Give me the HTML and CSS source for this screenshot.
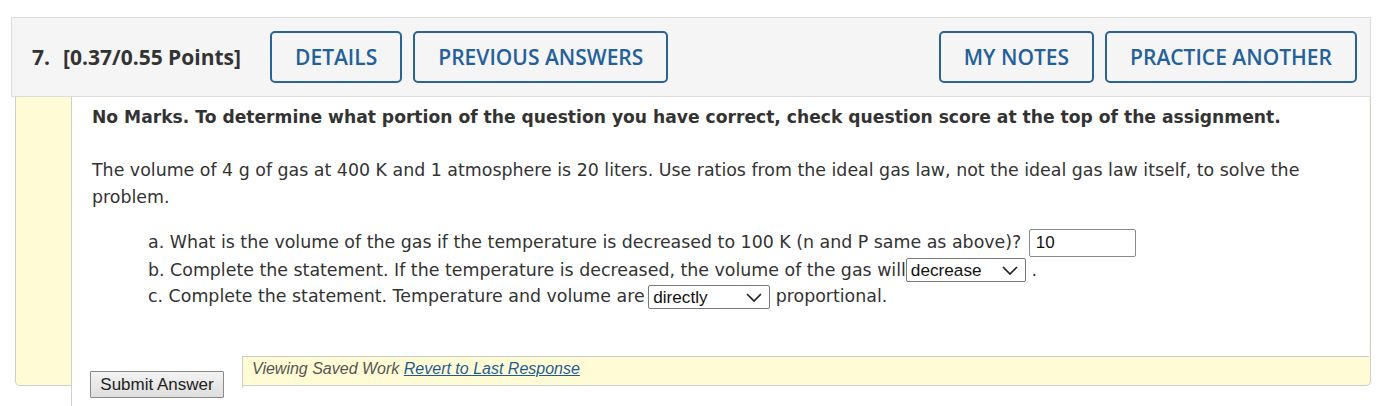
FILE: index.html
```html
<!DOCTYPE html>
<html lang="en">
<head>
<meta charset="utf-8">
<title>Question 7</title>
<link rel="stylesheet" href="styles.css">
</head>
<body>
<div class="question">
  <div class="q-header">
    <div class="q-title"><span class="q-num">7.</span>[0.37/0.55 Points]</div>
    <div class="q-actions">
      <button class="hbtn">DETAILS</button>
      <button class="hbtn">PREVIOUS ANSWERS</button>
    </div>
    <div class="q-actions right">
      <button class="hbtn">MY NOTES</button>
      <button class="hbtn">PRACTICE ANOTHER</button>
    </div>
  </div>
  <div class="q-body">
    <div class="strip"></div>
    <div class="main">
      <div class="content">
        <p class="notice">No Marks. To determine what portion of the question you have correct, check question score at the top of the assignment.</p>
        <p class="prompt">The volume of 4 g of gas at 400 K and 1 atmosphere is 20 liters. Use ratios from the ideal gas law, not the ideal gas law itself, to solve the problem.</p>
        <ol class="parts">
          <li class="part-a">a. What is the volume of the gas if the temperature is decreased to 100 K (n and P same as above)? <span class="tinput">10</span></li>
          <li class="part-b">b. Complete the statement. If the temperature is decreased, the volume of the gas will<span class="sel sel-b"><span class="sel-text">decrease</span><svg class="chev" width="16" height="9" viewBox="0 0 16 9"><path d="M1 1 L8 8 L15 1" fill="none" stroke="#222" stroke-width="1.7"/></svg></span> .</li>
          <li class="part-c">c. Complete the statement. Temperature and volume are <span class="sel sel-c"><span class="sel-text">directly</span><svg class="chev" width="16" height="9" viewBox="0 0 16 9"><path d="M1 1 L8 8 L15 1" fill="none" stroke="#222" stroke-width="1.7"/></svg></span> proportional.</li>
        </ol>
      </div>
      <div class="bottom">
        <div class="submit-cell"><button class="submit">Submit Answer</button></div>
        <div class="saved-cell"><span class="saved">Viewing Saved Work <a href="#" class="revert">Revert to Last Response</a></span></div>
      </div>
    </div>
  </div>
</div>
</body>
</html>
```
FILE: styles.css
```css
html, body {
  margin: 0;
  padding: 0;
  background: #ffffff;
}
body {
  overflow: hidden;
  height: 406px;
}
.question {
  margin: 17px 0 0 11px;
  width: 1360px;
}
.q-header {
  box-sizing: border-box;
  height: 80px;
  background: #f5f5f5;
  border: 1px solid #dcdcdc;
  display: flex;
  align-items: center;
  padding: 0 13px 0 20px;
}
.q-title {
  font-family: "Open Sans", "Liberation Sans", sans-serif;
  font-weight: 700;
  font-size: 21px;
  color: #333333;
  margin-right: 29px;
  white-space: nowrap;
}
.q-num {
  margin-right: 13px;
}
.q-actions {
  display: flex;
  gap: 11px;
}
.q-actions.right {
  margin-left: auto;
}
.hbtn {
  box-sizing: border-box;
  height: 52px;
  padding: 0 23px;
  background: #f5f5f5;
  border: 2px solid #2a6398;
  border-radius: 5px;
  color: #24609a;
  font-family: "Open Sans", "Liberation Sans", sans-serif;
  font-weight: 600;
  font-size: 21px;
  cursor: pointer;
}
.q-actions:first-of-type .hbtn {
  padding: 0 24px;
}
.q-body {
  margin-left: 4px;
  height: 288px;
  background: #fffcd5;
  border: 1px solid #cfcfcf;
  border-top: none;
  border-radius: 0 0 5px 5px;
  display: flex;
}
.strip {
  width: 55px;
  flex: none;
}
.main {
  flex: 1;
  display: flex;
  flex-direction: column;
  margin-right: 1px;
}
.content {
  box-sizing: border-box;
  flex: none;
  height: 259px;
  background: #ffffff;
  border-left: 1px solid #cfcfcf;
  padding: 7px 20px 0 20px;
  font-family: "DejaVu Sans", Verdana, sans-serif;
  font-size: 17.4px;
  color: #333333;
  line-height: 27px;
}
.notice {
  margin: 0 0 26px 0;
  font-weight: 700;
  font-size: 17.15px;
}
.prompt {
  margin: 0 0 18px 0;
}
.parts {
  list-style: none;
  margin: 0;
  padding: 0 0 0 56px;
}
.part-a {
  height: 28px;
}
.part-b, .part-c {
  height: 26px;
}
.tinput {
  display: inline-block;
  box-sizing: border-box;
  width: 107px;
  height: 28px;
  margin-left: 2px;
  border: 1px solid #8a8a8a;
  border-radius: 2px;
  padding-left: 6px;
  font-family: "Liberation Sans", Arial, sans-serif;
  font-size: 17px;
  line-height: 26px;
  color: #111111;
  vertical-align: middle;
}
.sel {
  display: inline-flex;
  align-items: center;
  box-sizing: border-box;
  height: 24px;
  border: 1px solid #7a7a7a;
  border-radius: 2px;
  padding: 0 7px 0 4px;
  font-family: "Liberation Sans", Arial, sans-serif;
  font-size: 17.2px;
  color: #111111;
  vertical-align: middle;
  line-height: 22px;
}
.sel-b {
  width: 120px;
  margin-top: -2px;
}
.sel-c {
  width: 122px;
  margin-left: -2px;
}
.sel-text {
  flex: 1;
}
.chev {
  flex: none;
}
.bottom {
  display: flex;
  height: 52px;
  flex: none;
}
.submit-cell {
  box-sizing: border-box;
  width: 171px;
  background: #ffffff;
  border-left: 1px solid #cfcfcf;
  padding: 15px 0 0 18px;
}
.submit {
  box-sizing: border-box;
  width: 134px;
  height: 27px;
  border: 1px solid #8a8a8a;
  border-radius: 1px;
  background: linear-gradient(#f3f3f3, #dedede);
  font-family: "Liberation Sans", Arial, sans-serif;
  font-size: 17px;
  color: #222222;
  padding: 0;
}
.saved-cell {
  flex: 1;
  border-left: 1px solid #cfcfcf;
  border-top: 1px solid #c8c8c8;
  padding: 3px 0 0 9px;
  height: 28px;
}
.saved {
  font-family: "Liberation Sans", Arial, sans-serif;
  font-style: italic;
  font-size: 16px;
  color: #555555;
}
.revert {
  color: #1f5c97;
  text-decoration: underline;
}
```
